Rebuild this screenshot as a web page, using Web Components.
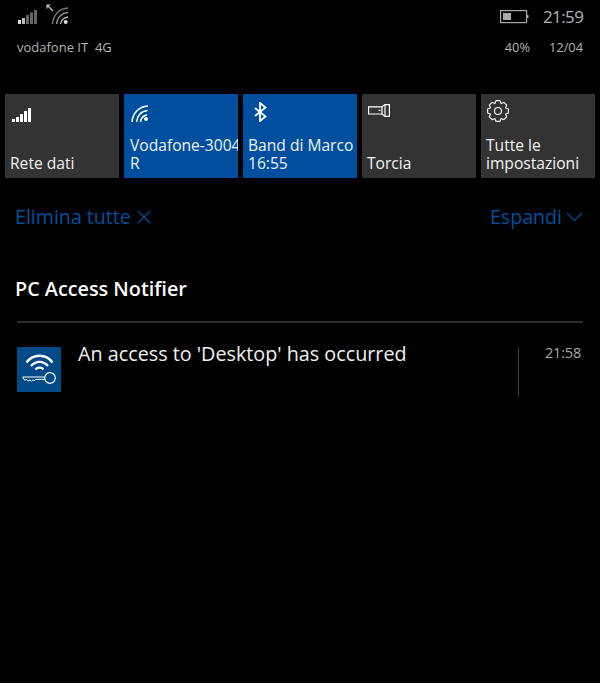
<!DOCTYPE html>
<html>
<head>
<meta charset="utf-8">
<title>Centro notifiche</title>
<style>
  html, body { margin: 0; padding: 0; background: #000; }
  body { width: 600px; height: 683px; overflow: hidden; font-family: "Open Sans", "Noto Sans", sans-serif; color: #fff; }
</style>
</head>
<body>
<status-bar></status-bar>

<tile-row>
  <quick-tile label="Rete dati">
    <svg slot="icon" width="22" height="14" viewBox="0 0 22 14" fill="#fff">
      <rect x="1" y="11" width="3" height="3"/><rect x="5" y="9" width="3" height="5"/><rect x="9" y="6" width="3" height="8"/><rect x="13" y="3" width="3" height="11"/><rect x="17" y="0" width="3" height="14"/>
    </svg>
  </quick-tile>
  <quick-tile active style="--label-x:1px" label="Vodafone-3004&#10;R">
    <svg slot="icon" width="20" height="18" viewBox="0 0 20 18" fill="none" stroke="#fff" stroke-width="1.5">
      <path d="M2 18C2.5 10 8 2.5 18 2"/><path d="M6.5 18C7 12 11 7 17.5 6.5"/><path d="M10.5 18C11 14 13 11.5 17 11"/>
      <circle cx="16" cy="15" r="2" fill="#fff" stroke="none"/>
    </svg>
  </quick-tile>
  <quick-tile active label="Band di Marco&#10;16:55">
    <svg slot="icon" width="22" height="20" viewBox="0 0 22 20" fill="none" stroke="#fff" stroke-width="1.8">
      <path d="M6 6L16.5 14.5L11 19V1L16.5 5.5L6 14"/>
    </svg>
  </quick-tile>
  <quick-tile label="Torcia">
    <svg slot="icon" style="margin-bottom:5px" width="22" height="13" viewBox="0 0 22 13" fill="none" stroke="#fff" stroke-width="1.2">
      <path d="M.6 2.8H14V10H.6Z"/><path d="M14 2.8L17 .6H21.4V12.4H17L14 10"/><path d="M17 .6V12.4"/><path d="M10.5 6.4H12.5"/>
    </svg>
  </quick-tile>
  <quick-tile label="Tutte le&#10;impostazioni">
    <gear-icon slot="icon"></gear-icon>
  </quick-tile>
</tile-row>

<action-row></action-row>

<notification-group title-text="PC Access Notifier">
  <notification-item text="An access to 'Desktop' has occurred" time="21:58"></notification-item>
</notification-group>

<script>
// status bar at the top, two lines of small gray text and icons
class StatusBar extends HTMLElement {
  constructor() {
    super();
    this.attachShadow({ mode: "open" });
    this.shadowRoot.innerHTML = `
      <style>
        :host { display: block; height: 94px; box-sizing: border-box; padding: 0 17px; color: #b4b4b4; }
        .top { display: flex; align-items: flex-start; height: 36px; }
        .signal { margin-top: 9px; }
        .wifi { margin: 3px 0 0 6px; }
        .spacer { flex: 1; }
        .battery { margin: 9px 0 0 0; }
        .clock { font-size: 17px; line-height: 24px; margin: 5px 0 0 14px; width: 40px; letter-spacing: -.6px; }
        .bottom { display: flex; font-size: 13px; line-height: 18px; margin-top: 2px; }
        .percent { margin-right: 19px; font-size: 12.8px; }
        .date { width: 34px; font-size: 12.8px; white-space: nowrap; }
      </style>
      <div class="top">
        <svg class="signal" width="22" height="16" viewBox="0 0 22 16">
          <rect x="1" y="11" width="3" height="4" fill="#ddd"/><rect x="5" y="9" width="3" height="6" fill="#bbb"/>
          <rect x="9" y="6" width="3" height="9" fill="#666"/><rect x="13" y="3.5" width="3" height="11.5" fill="#666"/><rect x="17" y="1" width="3" height="14" fill="#666"/>
        </svg>
        <svg class="wifi" width="26" height="24" viewBox="0 0 26 24" fill="none" stroke-width="1.4">
          <path d="M2 2L8 8M2 2V5.5M2 2H5.5" stroke="#ccc" stroke-width="1.2"/>
          <path d="M7.5 21C8 12.5 14 5.5 23 5" stroke="#777"/><path d="M11.5 21C12 15.5 16 10 23 9.5" stroke="#999"/><path d="M15.5 21C16 18 18.5 14.5 23 14" stroke="#bbb"/>
          <circle cx="20.7" cy="19" r="2" fill="#ddd" stroke="none"/>
        </svg>
        <span class="spacer"></span>
        <svg class="battery" width="30" height="15" viewBox="0 0 30 15">
          <rect x="1.6" y="1.6" width="26" height="12" fill="none" stroke="#aaa" stroke-width="1.2"/>
          <rect x="4" y="4" width="8" height="7" fill="#aaa"/>
          <rect x="28" y="6" width="1.5" height="3" fill="#aaa"/>
        </svg>
        <span class="clock">21:59</span>
      </div>
      <div class="bottom">
        <span>vodafone IT&nbsp; 4G</span>
        <span class="spacer"></span>
        <span class="percent">40%</span>
        <span class="date">12/04</span>
      </div>
    `;
  }
}

class TileRow extends HTMLElement {
  constructor() {
    super();
    this.attachShadow({ mode: "open" });
    this.shadowRoot.innerHTML = `
      <style>
        :host { display: grid; grid-template-columns: repeat(5, 114px); gap: 5px; padding: 0 5px; }
      </style>
      <slot></slot>
    `;
  }
}

class QuickTile extends HTMLElement {
  constructor() {
    super();
    this.attachShadow({ mode: "open" });
    this.shadowRoot.innerHTML = `
      <style>
        :host { display: flex; flex-direction: column; justify-content: space-between; height: 84px; box-sizing: border-box; padding: 6px 0 6px 5px; background: #333; overflow: hidden; }
        :host([active]) { background: #004e9e; }
        .icon { display: flex; align-items: flex-end; height: 22px; padding-left: 1px; }
        .label { font-size: 15.6px; line-height: 18px; color: #f2f2f2; white-space: pre; padding-left: var(--label-x, 0); }
      </style>
      <div class="icon"><slot name="icon"></slot></div>
      <div class="label"></div>
    `;
  }
  connectedCallback() {
    this.shadowRoot.querySelector(".label").textContent = this.getAttribute("label");
  }
}

// eight rounded teeth, the path is worked out from the angles
class GearIcon extends HTMLElement {
  constructor() {
    super();
    this.attachShadow({ mode: "open" });
    let d = "";
    for (let k = 0; k < 8; k++) {
      const a = k * 45;
      [[9, a - 21], [11.5, a - 11], [11.5, a + 11], [9, a + 21]].forEach(([r, deg], i) => {
        const t = deg * Math.PI / 180;
        d += (k === 0 && i === 0 ? "M" : "L") + (12 + r * Math.sin(t)).toFixed(2) + " " + (12 - r * Math.cos(t)).toFixed(2);
      });
    }
    this.shadowRoot.innerHTML = `
      <style>:host { display: block; width: 22px; height: 22px; } svg { display: block; }</style>
      <svg width="22" height="22" viewBox="0 0 24 24" fill="none" stroke="#fff" stroke-width="1.2" stroke-linejoin="round">
        <circle cx="12" cy="12" r="3.8"/>
        <path d="${d}Z"/>
      </svg>
    `;
  }
}

class ActionRow extends HTMLElement {
  constructor() {
    super();
    this.attachShadow({ mode: "open" });
    this.shadowRoot.innerHTML = `
      <style>
        :host { display: flex; justify-content: space-between; align-items: flex-start; padding: 26px 17px 0 15px; height: 71px; color: #00509e; font-size: 19.6px; line-height: 26px; }
        span { display: inline-flex; align-items: center; gap: 6px; }
        span + span { gap: 4px; }
      </style>
      <span>Elimina tutte
        <svg width="14" height="14" viewBox="0 0 14 14" fill="none" stroke="#00509e" stroke-width="1.1"><path d="M1 1L13 13M13 1L1 13"/></svg>
      </span>
      <span>Espandi
        <svg width="17" height="10" viewBox="0 0 17 10" fill="none" stroke="#00509e" stroke-width="1.2"><path d="M1 1L8.5 8.5L16 1"/></svg>
      </span>
    `;
  }
}

class NotificationGroup extends HTMLElement {
  constructor() {
    super();
    this.attachShadow({ mode: "open" });
    this.shadowRoot.innerHTML = `
      <style>
        :host { display: block; padding: 0 17px 0 16px; }
        h2 { margin: 0 0 0 -1px; padding-top: 1px; box-sizing: border-box; font-size: 19.8px; font-weight: 600; line-height: 26px; color: #fafafa; height: 46px; }
        .rule { height: 2px; background: #2e2e2e; margin: 0 0 20px 1px; }
      </style>
      <h2></h2>
      <div class="rule"></div>
      <slot></slot>
    `;
  }
  connectedCallback() {
    this.shadowRoot.querySelector("h2").textContent = this.getAttribute("title-text");
  }
}

class NotificationItem extends HTMLElement {
  constructor() {
    super();
    this.attachShadow({ mode: "open" });
    this.shadowRoot.innerHTML = `
      <style>
        :host { display: flex; align-items: flex-start; height: 54px; }
        .app { width: 44px; height: 45px; margin: 4px 0 0 1px; flex: none; }
        .text { flex: 1; margin-left: 17px; font-size: 19.75px; line-height: 26px; color: #f0f0f0; margin-top: -2px; }
        .divider { width: 1px; height: 50px; background: #3a3a3a; margin: 4px 26px 0 0; }
        .time { font-size: 14.5px; line-height: 20px; color: #a8a8a8; width: 38px; letter-spacing: -.2px; }
      </style>
      <svg class="app" viewBox="0 0 44 45">
        <rect width="44" height="45" fill="#004a88"/>
        <g fill="none" stroke="#fff">
          <path d="M9.5 15.5C16 6.5 29 6.5 35.5 15.5" stroke-width="2.4"/>
          <path d="M14 19C19 13.5 26 13.5 31 19" stroke-width="2.4"/>
          <path d="M18.5 22.5C20.5 20 24.5 20 26.5 22.5" stroke-width="2.2"/>
          <circle cx="33" cy="31" r="5.3" stroke-width="1.2"/>
          <path d="M27.7 30H5.7L7.5 33L10 32.6L11 34L13 33L14.5 34L16 33L17.5 33.5L19 32.4H27.8" stroke-width="1"/>
        </g>
      </svg>
      <div class="text"></div>
      <div class="divider"></div>
      <div class="time"></div>
    `;
  }
  connectedCallback() {
    this.shadowRoot.querySelector(".text").textContent = this.getAttribute("text");
    this.shadowRoot.querySelector(".time").textContent = this.getAttribute("time");
  }
}

customElements.define("status-bar", StatusBar);
customElements.define("tile-row", TileRow);
customElements.define("quick-tile", QuickTile);
customElements.define("gear-icon", GearIcon);
customElements.define("action-row", ActionRow);
customElements.define("notification-group", NotificationGroup);
customElements.define("notification-item", NotificationItem);
</script>
</body>
</html>
